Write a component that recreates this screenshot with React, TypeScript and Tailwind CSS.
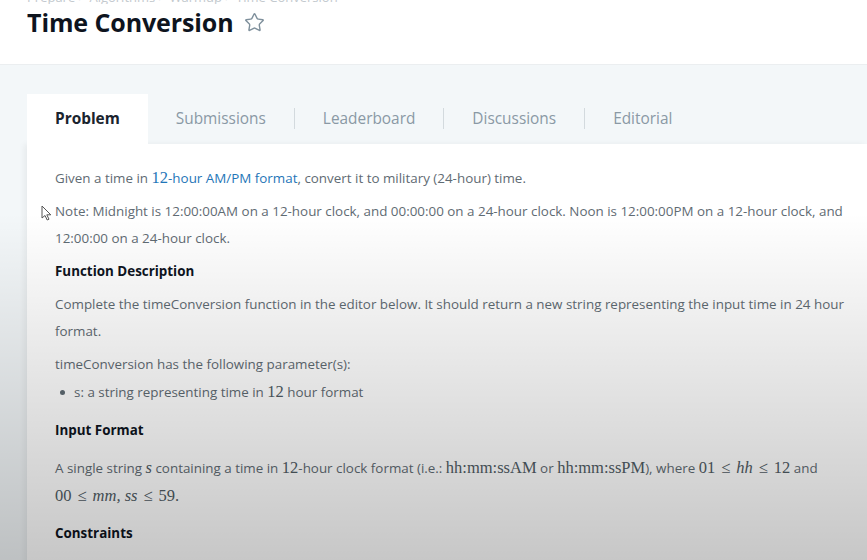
import { Star } from 'lucide-react';

const tabs = ['Submissions', 'Leaderboard', 'Discussions', 'Editorial'];

function M({ children, i }: { children: React.ReactNode; i?: boolean }) {
  return (
    <span className={`font-['Liberation_Serif',serif] text-[16.5px] text-[#4f5b63] ${i ? 'italic' : ''}`}>
      {children}
    </span>
  );
}

function Le() {
  return <span className="mx-[6px] font-['Liberation_Serif',serif] text-[16.5px] text-[#4f5b63]">≤</span>;
}

export default function App() {
  return (
    <div className="relative h-[560px] w-[867px] overflow-hidden bg-[#f3f7f9] font-['Open_Sans',sans-serif]">
      {/* header */}
      <div className="h-[65px] border-b border-[#ebeef0] bg-white px-[27px]">
        <div className="h-[4px] overflow-hidden">
          <div className="-mt-[12px] text-[13px] text-[#c3c9ce]">
            Prepare &gt; Algorithms &gt; Warmup &gt; Time Conversion
          </div>
        </div>
        <div className="mt-[1px] flex items-center gap-[10px]">
          <h1 className="text-[25px] font-bold leading-[34px] tracking-[-0.1px] text-[#0e141e]">Time Conversion</h1>
          <Star className="h-[21px] w-[21px] text-[#7f909c]" strokeWidth={1.6} />
        </div>
      </div>

      {/* tabs */}
      <div className="mt-[29px] flex h-[50px] items-center pl-[27px] text-[15.4px]">
        <div className="flex h-full items-center bg-white px-[28px] font-bold text-[#1a242e]">Problem</div>
        {tabs.map((t, idx) => (
          <div key={t} className="flex items-center">
            <span className="px-[28px] text-[#8a99a5]">{t}</span>
            {idx < tabs.length - 1 && <span className="h-[21px] w-px bg-[#d3dade]" />}
          </div>
        ))}
      </div>

      {/* content */}
      <div className="ml-[27px] h-full bg-white pl-[28px] pr-4 pt-[20px] text-[13.4px] leading-[27px] text-[#5f6b73] shadow-[-3px_0_6px_rgba(0,0,0,0.05)]">
        <p>
          Given a time in{' '}
          <span className="text-[#1f76b8]">
            <span className="font-['Liberation_Serif',serif] text-[16.5px]">12</span>-hour AM/PM format
          </span>
          , convert it to military (24-hour) time.
        </p>
        <p className="mt-[6px]">
          Note: Midnight is 12:00:00AM on a 12-hour clock, and 00:00:00 on a 24-hour clock. Noon is 12:00:00PM on a 12-hour clock, and 12:00:00 on a 24-hour clock.
        </p>
        <h3 className="mt-[6px] font-bold text-[#0e141e]">Function Description</h3>
        <p className="mt-[6px]">
          Complete the timeConversion function in the editor below. It should return a new string representing the input time in 24 hour format.
        </p>
        <p className="mt-[6px]">timeConversion has the following parameter(s):</p>
        <ul>
          <li className="flex items-center">
            <span className="ml-[5px] mr-[9px] h-[5px] w-[5px] rounded-full bg-[#5f6b73]" />
            <span>
              s: a string representing time in <M>12</M> hour format
            </span>
          </li>
        </ul>
        <h3 className="mt-[11px] font-bold text-[#0e141e]">Input Format</h3>
        <p className="mt-[10px]">
          A single string <M i>s</M> containing a time in <M>12</M>-hour clock format (i.e.: <M>hh:mm:ssAM</M> or{' '}
          <M>hh:mm:ssPM</M>), where <M>01</M>
          <Le />
          <M i>hh</M>
          <Le />
          <M>12</M> and{' '}
          <span className="whitespace-nowrap">
            <M>00</M>
            <Le />
            <M i>mm, ss</M>
            <Le />
            <M>59.</M>
          </span>
        </p>
        <h3 className="mt-[10px] font-bold text-[#0e141e]">Constraints</h3>
      </div>

      {/* mouse cursor */}
      <svg className="pointer-events-none absolute left-[41px] top-[205px]" width="11" height="16" viewBox="0 0 11 16">
        <path d="M1 1 L1 13 L4 10.5 L6.2 15 L8 14.2 L5.8 9.8 L9.8 9.8 Z" fill="#fff" stroke="#555" strokeWidth="1" strokeLinejoin="round" />
      </svg>

      {/* video darkening */}
      <div className="pointer-events-none absolute inset-0 bg-[linear-gradient(to_bottom,transparent_38%,rgba(0,0,0,0.22))]" />
    </div>
  );
}
